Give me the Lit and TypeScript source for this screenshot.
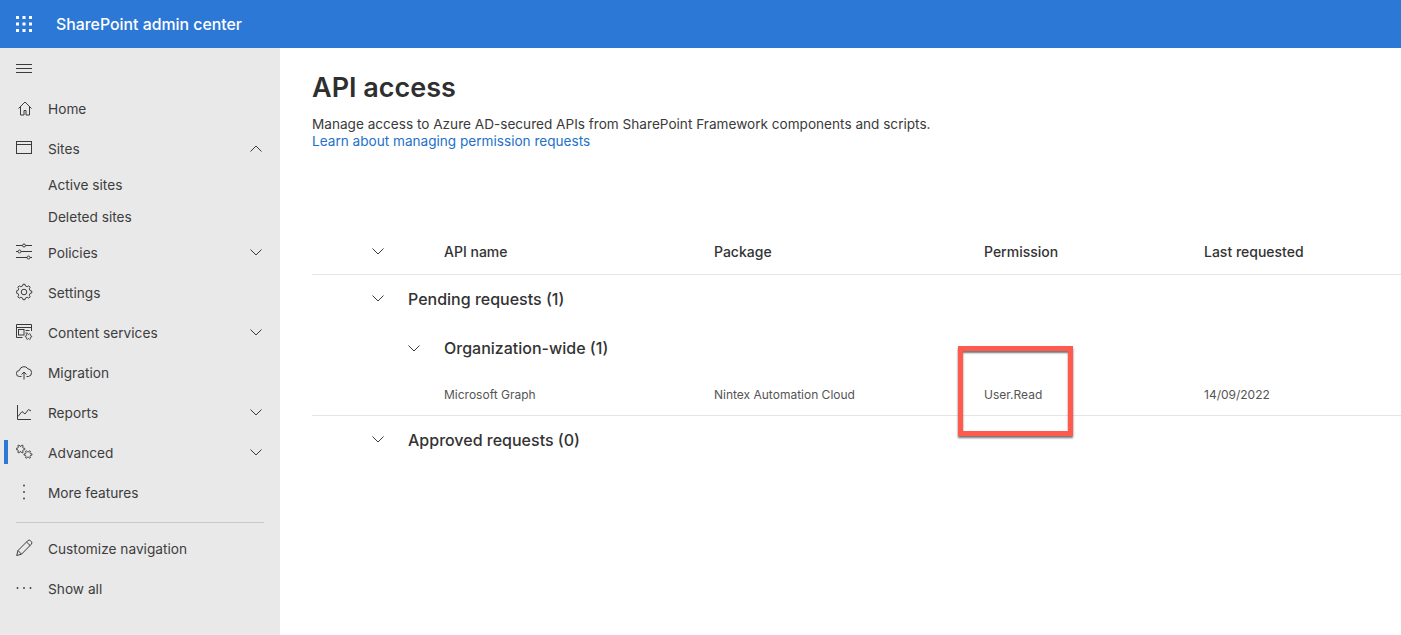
import { LitElement, html, css, svg } from "lit";
import { customElement } from "lit/decorators.js";

const chev = (up = false) => html`<svg class="chev" viewBox="0 0 12 7" width="12" height="7" fill="none" stroke="#3b3b3b" stroke-width="1"><path d=${up ? "M.5 6.500 6 1l5.500 5.500" : "M.5 .5 6 6l5.500-5.500"}/></svg>`;

/* Toothed gear outline, computed around a centre. */
const gear = (cx: number, cy: number, outer: number, inner: number, teeth = 8) => {
  const pts: string[] = [];
  const step = (Math.PI * 2) / teeth;
  for (let i = 0; i < teeth; i++) {
    const a = i * step;
    [[-0.3, inner], [-0.16, outer], [0.16, outer], [0.3, inner]].forEach(([f, r]) => {
      const t = a + f * step;
      pts.push(`${(cx + Math.cos(t) * r).toFixed(2)} ${(cy + Math.sin(t) * r).toFixed(2)}`);
    });
  }
  return `M${pts.join("L")}Z`;
};

const icons: Record<string, any> = {
  home: svg`<path d="M1.500 9.500 8 3l6.500 6.500M3.500 8v8h3.500v-4.500h2V16h3.500V8" transform="translate(1 0)"/>`,
  sites: svg`<rect x=".5" y="2.500" width="15" height="12"/><path d="M.5 5.500h15"/>`,
  policies: svg`<path d="M0 2.500h6.500M9.500 2.500H16M0 8.500h2M5 8.500h11M0 14.500h11M14 14.500h2"/><circle cx="8" cy="2.500" r="1.500"/><circle cx="3.500" cy="8.500" r="1.500"/><circle cx="12.500" cy="14.500" r="1.500"/>`,
  settings: svg`<circle cx="8" cy="9" r="2.800"/><path d=${gear(8, 9, 7.8, 6.2)}/>`,
  content: svg`<path d="M6.500 14.500H.5v-13h15v6.500M.5 4.500h15"/><rect x="2.500" y="6.500" width="5.500" height="5.500"/><path d="M9.500 7.500h4M9.500 10h2"/><path stroke-width=".8" d=${gear(12.5, 13.5, 3.2, 2.2, 6)}/>`,
  migration: svg`<path d="M5.500 13.500H3.500a3 3 0 0 1-.2-6A4.800 4.800 0 0 1 12 5.800a3.900 3.900 0 0 1 .5 7.700H10.500M8 16.500V9M5.500 11.500 8 9l2.500 2.500"/>`,
  reports: svg`<path d="M1.500 2v14.500H15M2 13.500l4-5 3 2.500 3.500-4.500 2.500 1.500"/>`,
  advanced: svg`<path stroke-width=".9" d=${gear(4.5, 6, 4.3, 2.8, 6)}/><path stroke-width=".9" d=${gear(12, 11.5, 4, 2.6, 6)}/>`,
  more: svg`<circle cx="8" cy="2.500" r=".9" fill="#3b3b3b" stroke="none"/><circle cx="8" cy="9" r=".9" fill="#3b3b3b" stroke="none"/><circle cx="8" cy="15.500" r=".9" fill="#3b3b3b" stroke="none"/>`,
  edit: svg`<path d="M.7 16.500l1.300-5L11.800 1.700a1.900 1.900 0 0 1 2.700 0l.8.8a1.900 1.900 0 0 1 0 2.700L5.500 15.200zM2 11.500l3.500 3.700M10.500 3l3.800 3.700"/>`,
  dots: svg`<circle cx="1.500" cy="9" r=".9" fill="#3b3b3b" stroke="none"/><circle cx="8" cy="9" r=".9" fill="#3b3b3b" stroke="none"/><circle cx="14.500" cy="9" r=".9" fill="#3b3b3b" stroke="none"/>`,
};

const icon = (n: string) => html`<svg class="ico" viewBox="0 0 18 18" width="18" height="18" fill="none" stroke="#3b3b3b" stroke-width="1">${icons[n]}</svg>`;

const waffle = html`<svg viewBox="0 0 16 16" width="16" height="16" fill="#fff">${[0, 6.5, 13].flatMap((y) => [0, 6.5, 13].map((x) => svg`<rect x=${x} y=${y} width="3" height="3"/>`))}</svg>`;

@customElement("app-root")
export class AppRoot extends LitElement {
  static styles = css`
    :host { display: block; width: 1401px; height: 635px; overflow: hidden; position: relative; background: #fff; font-family: Inter, "Liberation Sans", sans-serif; color: #333; }
    .top { height: 48px; background: #2c78d6; color: #fff; display: flex; align-items: center; padding-left: 16px; gap: 24px; font-size: 15.85px; font-weight: 500; }
    .top svg { display: block; }
    .body { display: flex; height: 587px; }
    nav { width: 280px; background: #e9e9e9; flex: none; font-size: 13.7px; color: #3d3d3d; }
    .burger { height: 41px; padding-left: 16px; box-sizing: border-box; display: flex; align-items: center; }
    .row { height: 40px; display: flex; align-items: center; padding: 0 16px; position: relative; }
    .row .ico { flex: none; width: 18px; margin: 0 14px 2px 0; }
    .row span { flex: 1; }
    .sub { height: 32px; display: flex; align-items: center; padding-left: 48px; }
    .active::before { content: ""; position: absolute; left: 4px; top: 7px; width: 4px; height: 24px; background: #2c78d6; }
    .rule { height: 1px; background: #c8c8c8; margin: 9px 16px 6px; }
    .chev { display: block; flex: none; }
    .row .chev { margin: 0 2px 2px 0; }
    main { flex: 1; padding: 22px 0 0 32px; min-width: 0; }
    h1 { margin: 0; font-size: 27px; line-height: 36px; font-weight: 600; color: #2f2f2f; }
    .desc { margin-top: 10px; font-size: 13.6px; line-height: 17px; color: #3a3a3a; }
    .desc a { color: #2271c8; display: block; text-decoration: none; }
    .table { margin-top: 81px; }
    .grid { display: grid; grid-template-columns: 132px 270px 270px 220px 1fr; align-items: center; }
    .head { height: 44px; padding-bottom: 3px; box-sizing: border-box; border-bottom: 1px solid #e6e6e6; font-size: 14px; font-weight: 500; color: #333; }
    .cchev { padding-left: 60px; }
    .group { display: flex; align-items: center; height: 49px; padding: 0 0 2px 60px; box-sizing: border-box; font-size: 16px; font-weight: 500; color: #333; gap: 24px; }
    .sub-group { padding: 0 0 0 96px; height: 48px; }
    .cells { height: 44px; padding-top: 2px; box-sizing: border-box; font-size: 12px; color: #555; border-bottom: 1px solid #e6e6e6; }
    .mark { position: absolute; left: 958px; top: 346px; width: 115px; height: 90px; box-sizing: border-box; border: 5px solid #ff5a4d; box-shadow: 0 2px 2px rgba(0,0,0,.55), inset 0 2px 2px rgba(0,0,0,.55); }
  `;

  render() {
    const item = (ic: string, label: string, c?: "up" | "down", cls = "") => html`<div class="row ${cls}">${icon(ic)}<span>${label}</span>${c ? chev(c === "up") : ""}</div>`;
    return html`
      <div class="top">${waffle}<div>SharePoint admin center</div></div>
      <div class="body">
        <nav>
          <div class="burger"><svg viewBox="0 0 16 10" width="16" height="10" fill="none" stroke="#3b3b3b" stroke-width="1"><path d="M0 .5h16M0 4.500h16M0 8.500h16"/></svg></div>
          ${item("home", "Home")}
          ${item("sites", "Sites", "up")}
          <div class="sub">Active sites</div>
          <div class="sub">Deleted sites</div>
          ${item("policies", "Policies", "down")}
          ${item("settings", "Settings")}
          ${item("content", "Content services", "down")}
          ${item("migration", "Migration")}
          ${item("reports", "Reports", "down")}
          ${item("advanced", "Advanced", "down", "active")}
          ${item("more", "More features")}
          <div class="rule"></div>
          ${item("edit", "Customize navigation")}
          ${item("dots", "Show all")}
        </nav>
        <main>
          <h1>API access</h1>
          <div class="desc">Manage access to Azure AD-secured APIs from SharePoint Framework components and scripts.
            <a>Learn about managing permission requests</a></div>
          <div class="table">
            <div class="grid head"><div class="cchev">${chev()}</div><div>API name</div><div>Package</div><div>Permission</div><div>Last requested</div></div>
            <div class="group">${chev()}<div>Pending requests (1)</div></div>
            <div class="group sub-group">${chev()}<div>Organization-wide (1)</div></div>
            <div class="grid cells"><div></div><div>Microsoft Graph</div><div>Nintex Automation Cloud</div><div>User.Read</div><div>14/09/2022</div></div>
            <div class="group">${chev()}<div>Approved requests (0)</div></div>
          </div>
        </main>
      </div>
      <div class="mark"></div>
    `;
  }
}
